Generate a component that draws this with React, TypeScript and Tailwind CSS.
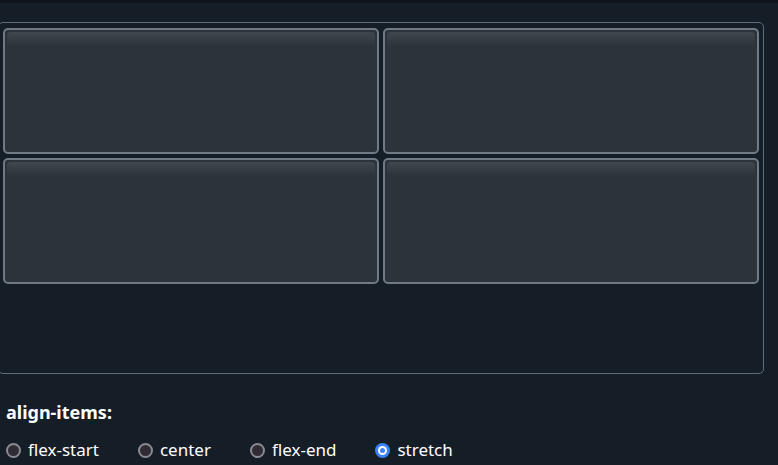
import React from 'react';

const App = () => {
  const options = ['flex-start', 'center', 'flex-end', 'stretch'];
  const selected = 'stretch';

  return (
    <div
      className="w-[778px] h-[465px] overflow-hidden bg-[#151e27] text-white"
      style={{ fontFamily: '"Noto Sans", "Open Sans", sans-serif' }}
    >
      <div className="h-[3px] bg-[#0f141b]" />
      <div className="pt-[19px] -ml-[2px] w-[766px]">
        {/* Flex container demo */}
        <div className="h-[352px] border border-[#5f6b76] rounded-[5px] px-[4px] pt-[5px]">
          <div className="grid grid-cols-2 gap-[4px]">
            {[0, 1, 2, 3].map((i) => (
              <div
                key={i}
                className="h-[126px] rounded-[5px] border-2 border-[#6f7a85] bg-[#2c333b] p-[2px]"
              >
                <div className="h-[14px] rounded-t-[4px] bg-gradient-to-b from-[#40474f] to-[#2c333b]" />
              </div>
            ))}
          </div>
        </div>
      </div>

      <div className="px-[6px] pt-[27px]">
        <h3 className="text-[18px] font-bold leading-[22px]">align-items:</h3>
        <div className="flex items-center gap-[39px] mt-[17px]">
          {options.map((opt) => (
            <label key={opt} className="flex items-center gap-[7px] text-[17px] leading-[20px]">
              {opt === selected ? (
                <span className="w-[15px] h-[15px] rounded-full bg-[#3b82f6] flex items-center justify-center">
                  <span className="w-[9px] h-[9px] rounded-full bg-white flex items-center justify-center">
                    <span className="w-[5px] h-[5px] rounded-full bg-[#3b82f6]" />
                  </span>
                </span>
              ) : (
                <span className="w-[15px] h-[15px] rounded-full border-2 border-[#8a8a92] bg-[#2f2c35]" />
              )}
              <span>{opt}</span>
            </label>
          ))}
        </div>
      </div>
    </div>
  );
};

export default App;
